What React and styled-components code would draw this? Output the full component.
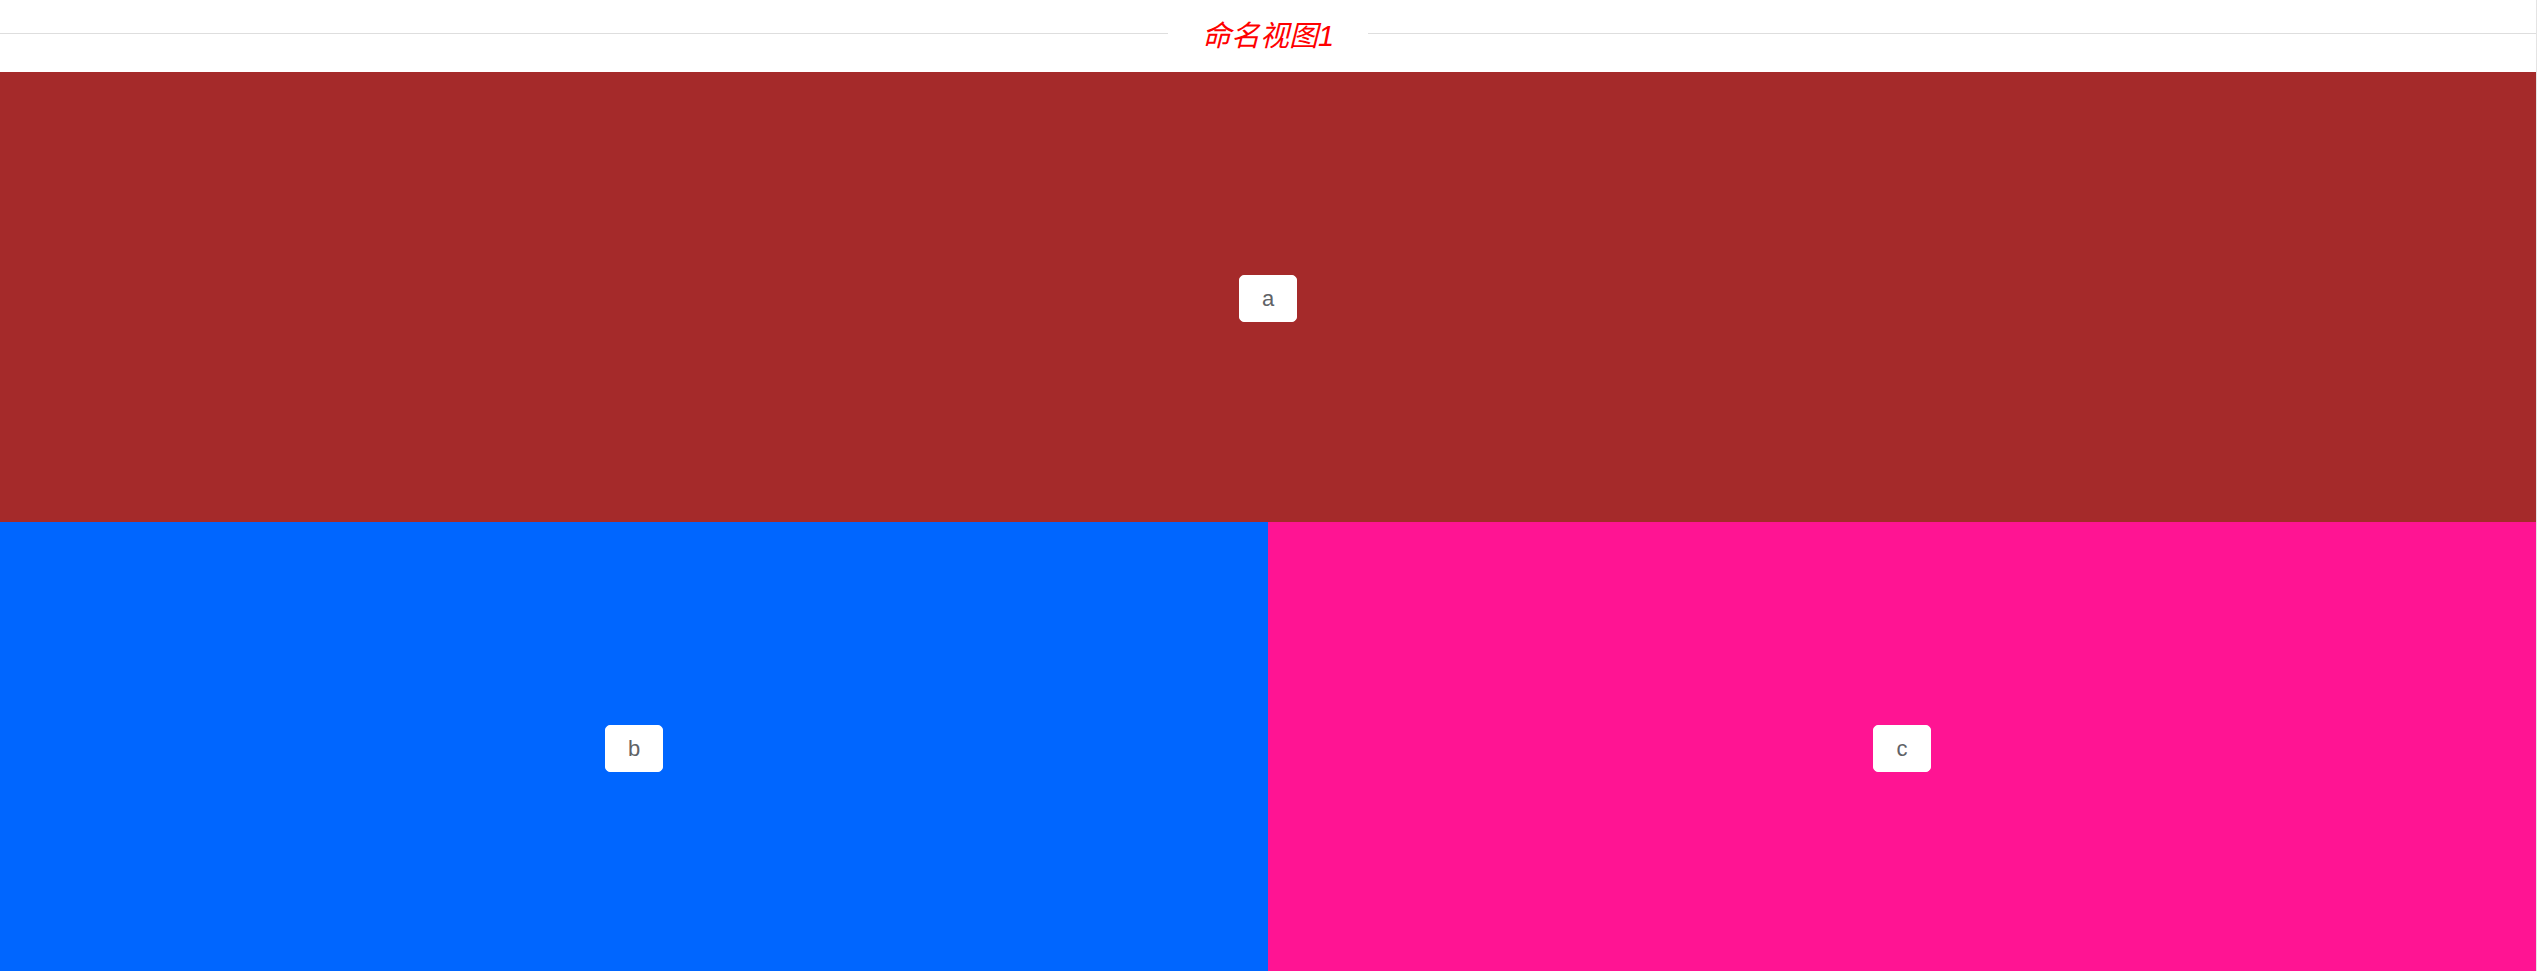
import React from "react";
import styled, { createGlobalStyle } from "styled-components";

const GlobalStyle = createGlobalStyle`
  html, body {
    margin: 0;
    padding: 0;
    background: #ffffff;
    overflow: hidden;
  }
  body {
    font-family: "Liberation Sans", "Noto Sans CJK SC", sans-serif;
  }
`;

const panes = [
  { name: "a", color: "#a52a2a", wide: true },
  { name: "b", color: "#0066ff" },
  { name: "c", color: "#ff1493" },
];

const App = () => {
  return (
    <Page>
      <GlobalStyle />
      <Header>
        <Divider>
          <Title>命名视图1</Title>
        </Divider>
      </Header>
      <Board>
        {panes.map((p) => (
          <Pane key={p.name} color={p.color} $wide={p.wide}>
            <PaneBtn>{p.name}</PaneBtn>
          </Pane>
        ))}
      </Board>
    </Page>
  );
};

export default App;

const Page = styled.div`
  width: 2536px;
  height: 971px;
  border-right: 1px solid #e4e4e4;
  overflow: hidden;
`;

const Header = styled.header`
  height: 72px;
  padding-top: 14px;
  box-sizing: border-box;
`;

const Divider = styled.div`
  display: flex;
  align-items: center;
  gap: 34px;
  height: 38px;

  &::before,
  &::after {
    content: "";
    flex: 1;
    height: 1px;
    background: #dedede;
  }
`;

const Title = styled.h1`
  margin: 0;
  padding-top: 5px;
  font-size: 29px;
  font-weight: 400;
  font-style: italic;
  color: #ff0000;
  line-height: 38px;
  font-family: "Liberation Sans", "Noto Sans CJK SC", sans-serif;
`;

const Board = styled.div`
  display: grid;
  grid-template-columns: 1fr 1fr;
  grid-template-rows: 450px 450px;
`;

const Pane = styled.div`
  grid-column: ${(p) => (p.$wide ? "1 / span 2" : "auto")};
  background: ${(p) => p.color};
  display: flex;
  align-items: center;
  justify-content: center;
`;

const PaneBtn = styled.button`
  width: 58px;
  height: 47px;
  margin-top: 3px;
  background: #ffffff;
  border: 1px solid #ffffff;
  border-radius: 5px;
  color: #606266;
  font-family: "Liberation Sans", sans-serif;
  font-size: 22px;
  padding: 0;
  cursor: pointer;
`;
